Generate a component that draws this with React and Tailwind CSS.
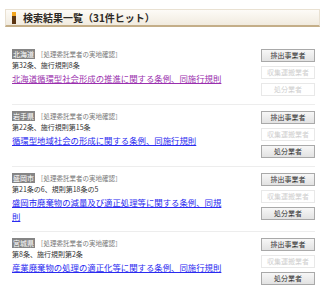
import React from "react";

const FONT = { fontFamily: '"Noto Sans CJK JP", "Noto Sans", sans-serif' };

const results = [
  {
    pref: "北海道",
    articles: "第32条、施行規則8条",
    title: "北海道循環型社会形成の推進に関する条例、同施行規則",
    visited: true,
    buttons: [true, false, false],
  },
  {
    pref: "岩手県",
    articles: "第22条、施行規則第15条",
    title: "循環型地域社会の形成に関する条例、同施行規則",
    buttons: [true, false, true],
  },
  {
    pref: "盛岡市",
    articles: "第21条の6、規則第18条の5",
    title: "盛岡市廃棄物の減量及び適正処理等に関する条例、同規則",
    buttons: [true, false, true],
  },
  {
    pref: "宮城県",
    articles: "第8条、施行規則第2条",
    title: "産業廃棄物の処理の適正化等に関する条例、同施行規則",
    buttons: [true, false, true],
  },
];

const labels = ["排出事業者", "収集運搬業者", "処分業者"];

const ActionButton = ({ label, enabled }) => (
  <button
    className={
      enabled
        ? "w-[54px] h-[13px] flex items-center justify-center text-[7px] leading-none text-[#333] border border-[#a9a9a9] bg-gradient-to-b from-[#f7f7f7] to-[#e2e2e2]"
        : "w-[54px] h-[13px] flex items-center justify-center text-[7px] leading-none text-[#cfcfcf] border border-[#e8e8e8] bg-white"
    }
  >
    {label}
  </button>
);

export default function App() {
  return (
    <div className="w-[331px] h-[304px] bg-white pt-[9px] overflow-hidden" style={FONT}>
      {/* Header */}
      <div className="ml-[5px] w-[315px] h-[18px] flex items-center gap-[7px] pl-[6px] border border-[#e9e1d2] border-b-[2px] border-b-[#c4ae88] bg-gradient-to-b from-[#fdfbf7] to-[#f1ebdf]">
        <div className="w-[4px] h-[12px] flex flex-col">
          <div className="h-[4px] bg-[#f2a51e]" />
          <div className="flex-1 bg-[#5b3512]" />
        </div>
        <h2 className="text-[10px] font-bold text-[#2e2a26] leading-none">
          検索結果一覧（31件ヒット）
        </h2>
      </div>

      {/* Results */}
      <div className="ml-[12px] w-[303px] mt-[16px]">
        {results.map((r, i) => (
          <div
            key={r.pref}
            className={`flex pt-[6px] pb-[8px] ${
              i < results.length - 1 ? "border-b border-[#ededed]" : ""
            }`}
          >
            <div className="w-[214px]">
              <div className="h-[10px] flex items-center">
                <span className="bg-[#858585] text-white text-[7px] leading-[10px] px-[1px]">
                  {r.pref}
                </span>
                <span className="ml-[2px] text-[6.5px] text-[#777] leading-none">
                  ［処理委託業者の実地確認］
                </span>
              </div>
              <p className="text-[7px] leading-[12px] text-[#333] flex items-center h-[12px]">
                {r.articles}
              </p>
              <div className="text-[8.4px] leading-[14px]">
                <a
                  href="#"
                  className={`underline ${
                    r.visited ? "text-[#9a2fae]" : "text-[#2a2af0]"
                  }`}
                >
                  {r.title}
                </a>
              </div>
            </div>
            <div className="ml-auto flex flex-col gap-[4px]">
              {labels.map((l, j) => (
                <ActionButton key={l} label={l} enabled={r.buttons[j]} />
              ))}
            </div>
          </div>
        ))}
      </div>
    </div>
  );
}
